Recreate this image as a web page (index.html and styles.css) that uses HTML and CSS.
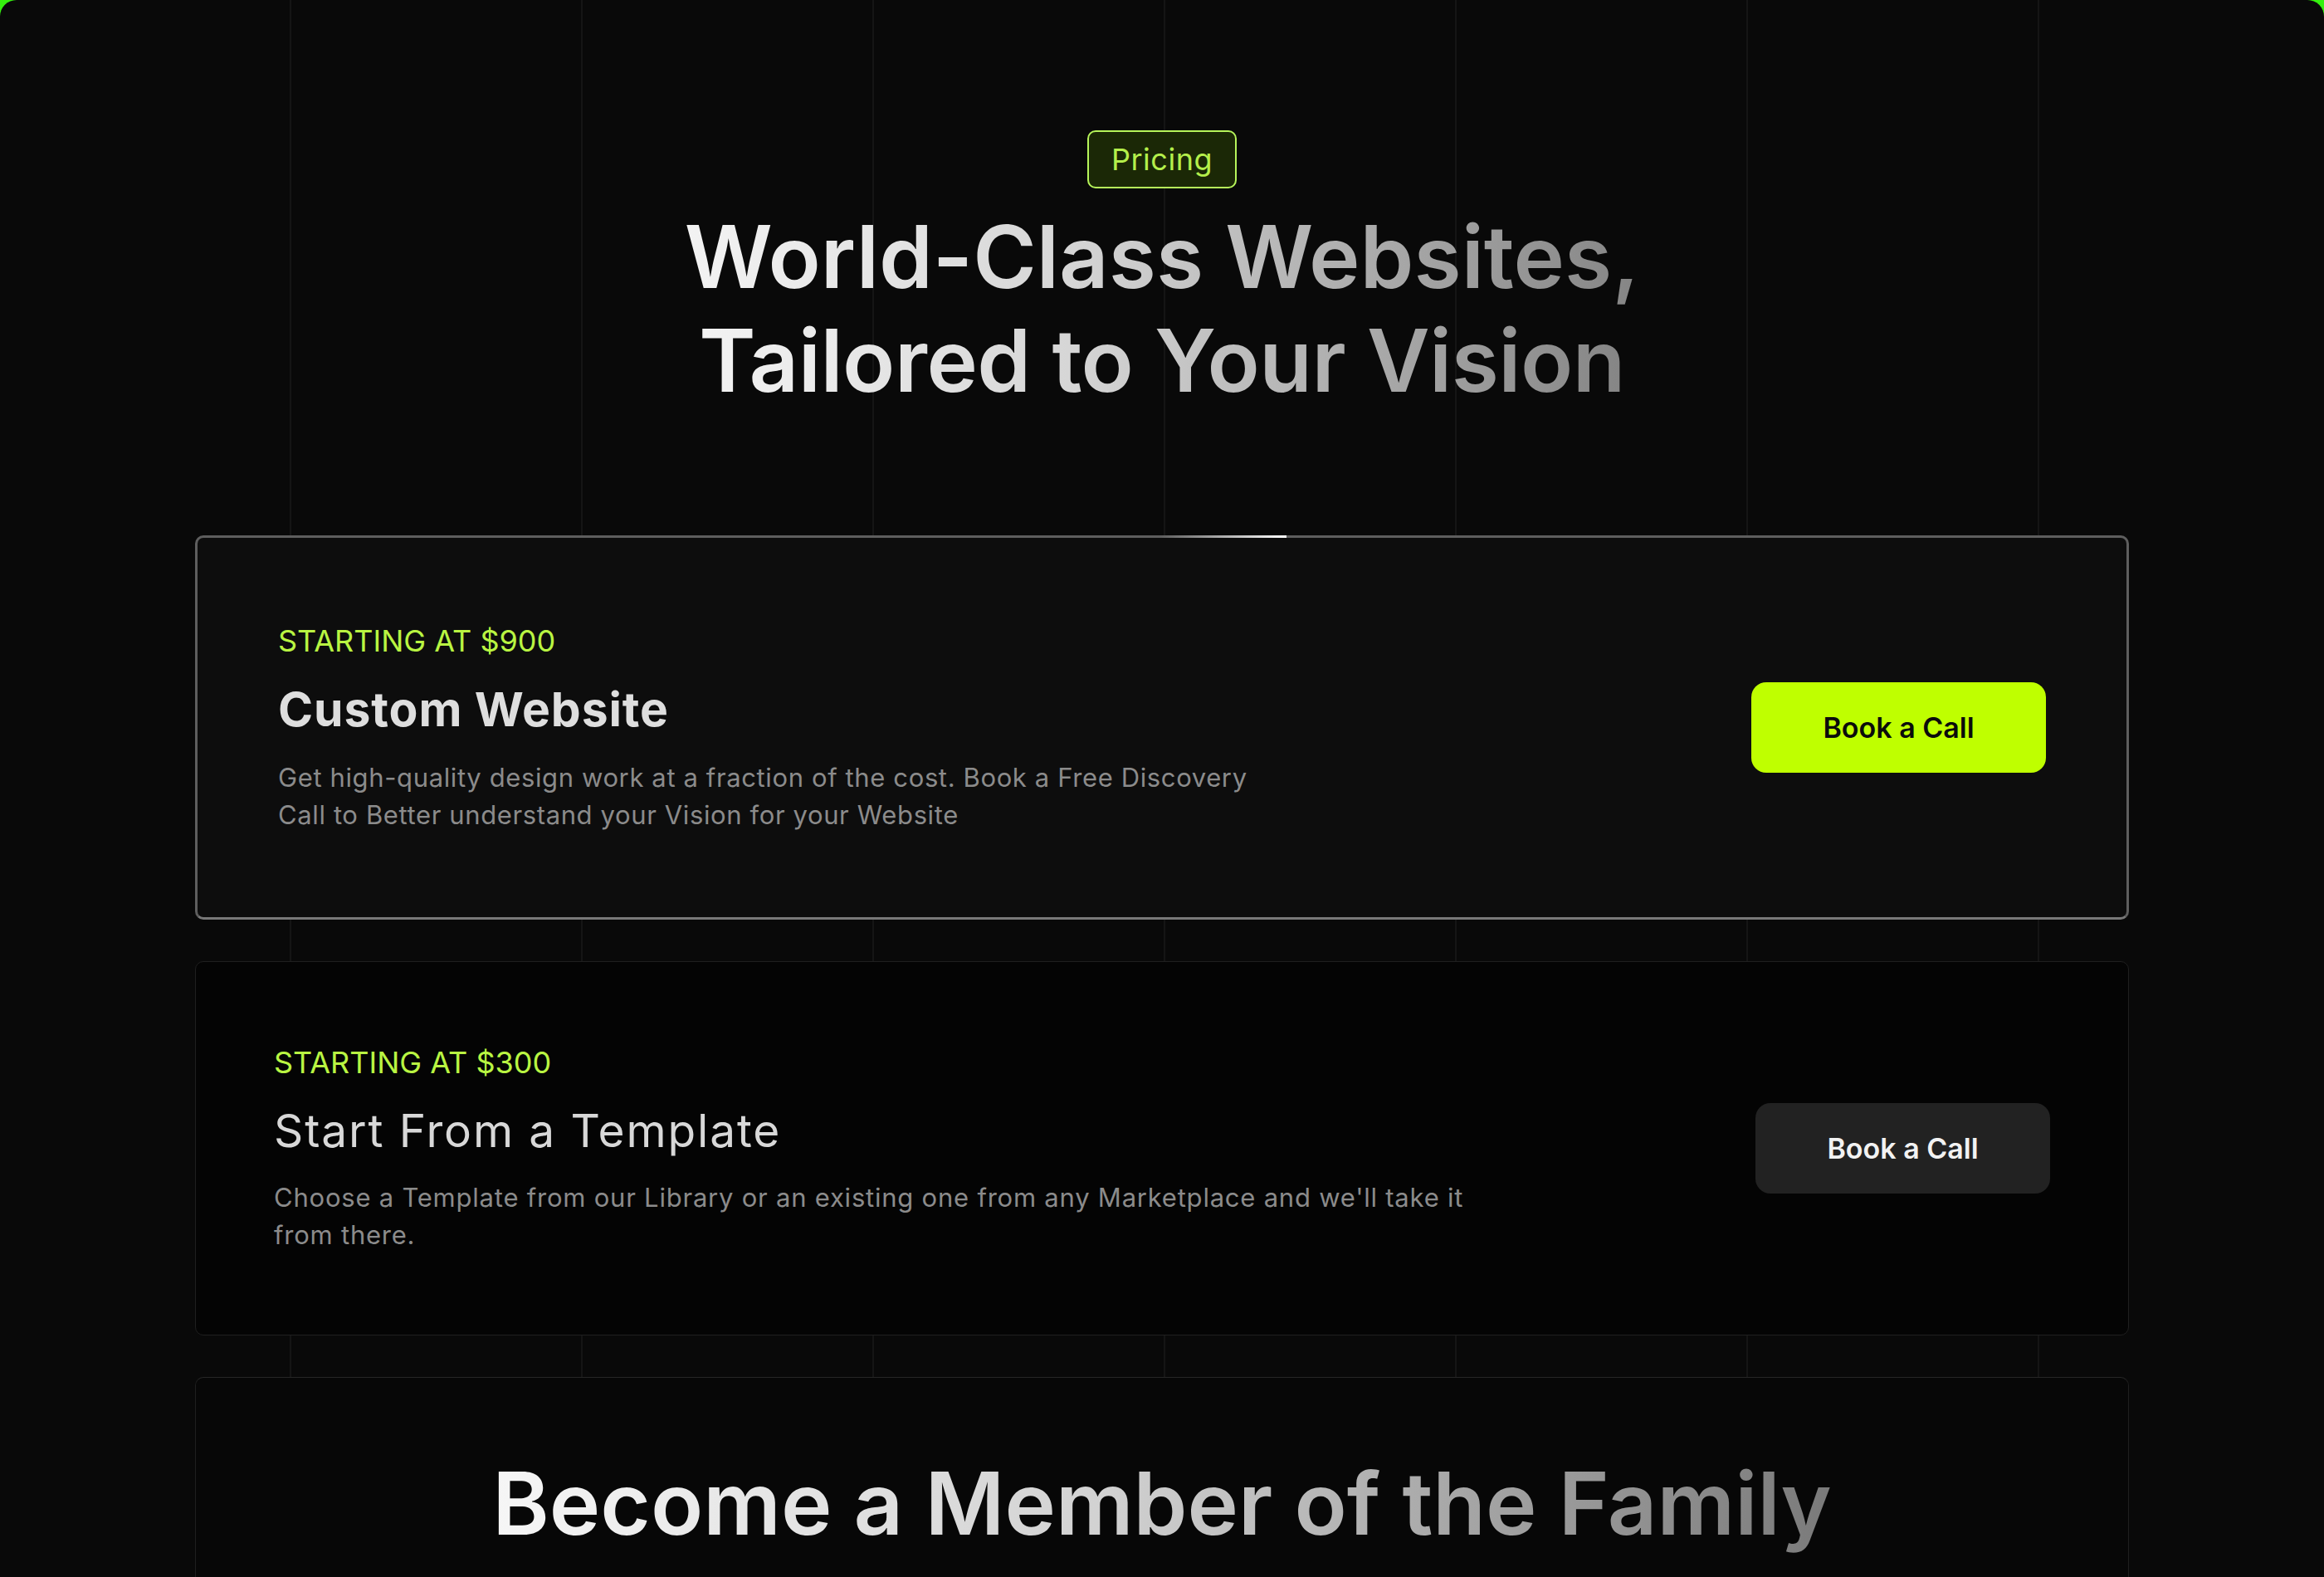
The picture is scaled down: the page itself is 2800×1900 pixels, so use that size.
FILE: index.html
```html
<!DOCTYPE html>
<html lang="en">
<head>
<meta charset="utf-8">
<title>Pricing</title>
<link rel="stylesheet" href="styles.css">
</head>
<body>
<div class="page">
  <section class="pricing">
    <div class="badge">Pricing</div>
    <h1 class="headline">
      <span class="headline-line line-one">World-Class Websites,</span>
      <span class="headline-line line-two">Tailored to Your Vision</span>
    </h1>

    <div class="cards">
      <div class="card card-featured">
        <span class="beam"></span>
        <div class="card-body">
          <p class="price">STARTING AT $900</p>
          <h2 class="title title-bold">Custom Website</h2>
          <p class="desc desc-short">Get high-quality design work at a fraction of the cost. Book a Free Discovery<br>Call to Better understand your Vision for your Website</p>
        </div>
        <a class="btn btn-lime" href="#">Book a Call</a>
      </div>

      <div class="card card-plain">
        <div class="card-body">
          <p class="price">STARTING AT $300</p>
          <h2 class="title title-light">Start From a Template</h2>
          <p class="desc desc-long">Choose a Template from our Library or an existing one from any Marketplace and we'll take it<br>from there.</p>
        </div>
        <a class="btn btn-dark" href="#">Book a Call</a>
      </div>

      <div class="card card-member">
        <h2 class="member-title">Become a Member of the Family</h2>
      </div>
    </div>
  </section>
</div>
</body>
</html>
```

FILE: styles.css
```css
* { box-sizing: border-box; }

html, body {
  margin: 0;
  padding: 0;
}

body {
  background: #35f00f;
  font-family: "Inter", "Open Sans", Arial, sans-serif;
  color: #e6e6e6;
  overflow: hidden;
}

.page {
  min-height: 2100px;
  background-color: #090909;
  background-image: repeating-linear-gradient(to right, transparent 0, transparent 349px, #151515 349px, #151515 351px);
  border-radius: 20px 20px 0 0;
}

.pricing {
  padding-top: 157px;
  display: flex;
  flex-direction: column;
  align-items: center;
}

.badge {
  height: 70px;
  padding: 0 27px;
  display: flex;
  align-items: center;
  border: 2px solid #b6f45a;
  border-radius: 10px;
  background: #1b2806;
  color: #b4ef4b;
  font-size: 36px;
  font-weight: 400;
  letter-spacing: 0.015em;
}

.headline {
  margin: 20px 0 0;
  display: flex;
  flex-direction: column;
  align-items: center;
  font-size: 104px;
  line-height: 125px;
  font-weight: 600;
}

.headline-line {
  display: block;
  background: linear-gradient(90deg, #f3f3f3 0%, #d6d6d6 40%, #858585 100%);
  -webkit-background-clip: text;
  background-clip: text;
  color: transparent;
}

.line-one { letter-spacing: 0; }
.line-two { letter-spacing: -0.005em; }

.cards {
  width: 2330px;
  margin-top: 148px;
  display: flex;
  flex-direction: column;
  gap: 50px;
}

.card {
  position: relative;
  display: flex;
  align-items: center;
  justify-content: space-between;
  border-radius: 10px;
}

.card-featured {
  height: 463px;
  padding: 0 97px;
  background: #0d0d0d;
  border: 3px solid #5e5e5e;
  border-bottom-color: #787878;
}

.beam {
  position: absolute;
  top: -3px;
  left: 1160px;
  width: 152px;
  height: 3px;
  background: linear-gradient(90deg, rgba(255,255,255,0) 0%, #ffffff 100%);
}

.card-plain {
  height: 451px;
  padding: 0 94px;
  background: #040404;
  border: 1px solid #1f1f1f;
}

.card-member {
  height: 400px;
  align-items: flex-start;
  justify-content: center;
  padding-top: 89px;
  background: #070707;
  border: 1px solid #1f1f1f;
  border-top-color: #262626;
}

.card-body {
  display: flex;
  flex-direction: column;
}

.price {
  margin: 0;
  font-family: "Inter", Arial, sans-serif;
  font-size: 36px;
  line-height: 44px;
  font-weight: 400;
  color: #b9f542;
}

.title {
  margin: 27px 0 0;
  color: #dedede;
}

.title-bold {
  font-size: 57px;
  line-height: 68px;
  font-weight: 700;
  letter-spacing: 0.016em;
}

.title-light {
  font-size: 55px;
  line-height: 66px;
  font-weight: 400;
  letter-spacing: 0.034em;
  color: #d8d8d8;
}

.desc {
  margin: 25px 0 0;
  font-size: 31px;
  line-height: 45px;
  font-weight: 400;
  color: #8b8b8b;
  white-space: nowrap;
}

.desc-short { letter-spacing: 0.02em; }
.desc-long { letter-spacing: 0.025em; }

.btn {
  width: 355px;
  height: 109px;
  border-radius: 18px;
  display: flex;
  align-items: center;
  justify-content: center;
  font-size: 34px;
  font-weight: 600;
  text-decoration: none;
  flex-shrink: 0;
}

.btn-lime {
  background: #bfff00;
  color: #0b0b0b;
}

.btn-dark {
  background: #222222;
  color: #f2f2f2;
}

.member-title {
  margin: 0;
  font-size: 104px;
  line-height: 125px;
  font-weight: 600;
  letter-spacing: 0;
  background: linear-gradient(90deg, #f6f6f6 0%, #d2d2d2 45%, #7a7a7a 100%);
  -webkit-background-clip: text;
  background-clip: text;
  color: transparent;
}
```
